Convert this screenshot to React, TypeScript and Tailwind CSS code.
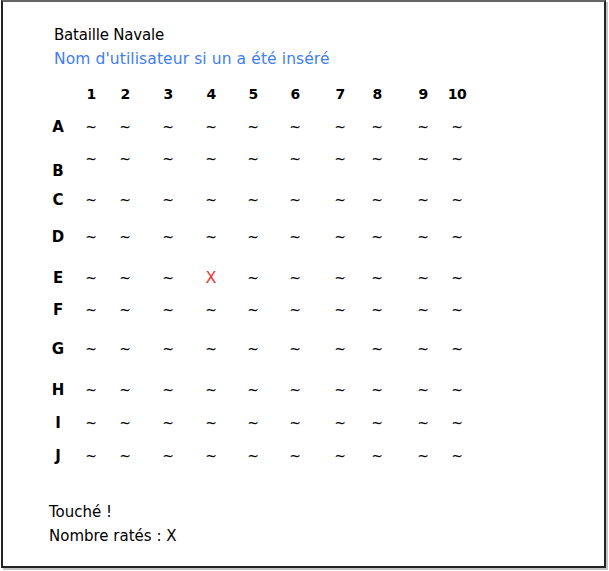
const cols = ["1", "2", "3", "4", "5", "6", "7", "8", "9", "10"];
const rows = ["A", "B", "C", "D", "E", "F", "G", "H", "I", "J"];

// écarts irréguliers entre les colonnes, comme sur la maquette
const colGaps = ["ml-[9px]", "ml-[10px]", "ml-[19px]", "ml-[19px]", "ml-[18px]", "ml-[18px]", "ml-[21px]", "ml-[13px]", "ml-[22px]", "ml-[10px]"];
const rowGaps = ["mt-[13px]", "mt-[12px]", "mt-[21px]", "mt-[17px]", "mt-[21px]", "mt-[12px]", "mt-[19px]", "mt-[21px]", "mt-[13px]", "mt-[13px]"];

const hits: Record<string, boolean> = { "E-4": true };

const App = () => {
  return (
    <div className="w-[609px] h-[571px] bg-white" style={{ fontFamily: "'DejaVu Sans', 'Noto Sans', sans-serif" }}>
      <div className="ml-[1px] w-[605px] h-[568px] border-2 border-[#222] border-t-[#666] shadow-[2px_2px_0_#c4c4c4] pl-[43px] text-black">
        <h1 className="ml-[8px] mt-[21px] text-[15px] leading-6 tracking-[-0.2px]">Bataille Navale</h1>
        <p className="ml-[8px] text-[15.5px] leading-6 tracking-[0.1px] text-[#3f7ef0]">Nom d'utilisateur si un a été inséré</p>

        <div className="mt-[13px] flex h-5 items-center">
          <div className="w-6" />
          {cols.map((c, i) => (
            <div key={c} className={`${colGaps[i]} w-6 text-center text-[14px] font-bold leading-5 tracking-[-0.5px]`}>
              {c}
            </div>
          ))}
        </div>

        {rows.map((r, ri) => (
          <div key={r} className={`${rowGaps[ri]} flex h-5 items-start`}>
            <div className={`w-6 text-center text-[15px] font-bold leading-5 ${r === "B" ? "mt-[12px]" : ""}`}>{r}</div>
            {cols.map((c, i) => (
              <div key={c} className={`${colGaps[i]} w-6 text-center leading-5`}>
                {hits[`${r}-${c}`] ? (
                  <span className="text-[16px] text-[#e53935]">X</span>
                ) : (
                  <span className="text-[14px]">~</span>
                )}
              </div>
            ))}
          </div>
        ))}

        <p className="ml-[3px] mt-[34px] text-[15px] leading-6">Touché !</p>
        <p className="ml-[3px] text-[15px] leading-6">Nombre ratés : X</p>
      </div>
    </div>
  );
};

export default App;
